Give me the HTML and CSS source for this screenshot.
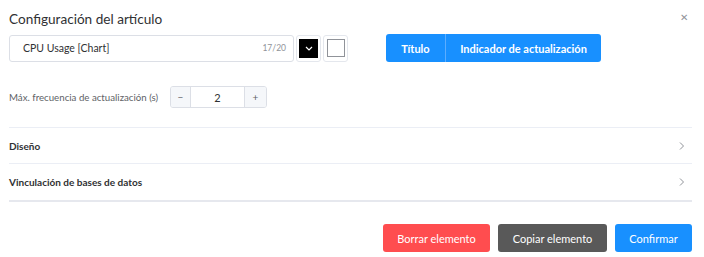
FILE: index.html
```html
<!DOCTYPE html>
<html lang="es">
<head>
    <meta charset="UTF-8">
    <title>Configuración del artículo</title>
    <link rel="stylesheet" href="styles.css">
</head>
<body>
    <div class="dialog">
        <div class="dialog-header">
            <span class="dialog-title">Configuración del artículo</span>
            <span class="close">&#x2715;</span>
        </div>

        <div class="title-row">
            <div class="title-input">
                <span class="value">CPU Usage [Chart]</span>
                <span class="count">17/20</span>
            </div>
            <div class="picker">
                <div class="swatch black">
                    <svg width="8" height="5" viewBox="0 0 8 5"><path d="M1 1l3 3 3-3" fill="none" stroke="#fff" stroke-width="1.2"/></svg>
                </div>
            </div>
            <div class="picker">
                <div class="swatch white"></div>
            </div>
            <div class="btn-group">
                <div class="seg">Título</div>
                <div class="seg">Indicador de actualización</div>
            </div>
        </div>

        <div class="freq-row">
            <label>Máx. frecuencia de actualización (s)</label>
            <div class="num-input">
                <span class="step">&minus;</span>
                <span class="num">2</span>
                <span class="step">+</span>
            </div>
        </div>

        <div class="collapse">
            <div class="collapse-item">
                <span>Diseño</span>
                <svg width="8" height="10" viewBox="0 0 8 10"><path d="M2 1.5l3.5 3.5-3.5 3.5" fill="none" stroke="#909399" stroke-width="1"/></svg>
            </div>
            <div class="collapse-item last">
                <span>Vinculación de bases de datos</span>
                <svg width="8" height="10" viewBox="0 0 8 10"><path d="M2 1.5l3.5 3.5-3.5 3.5" fill="none" stroke="#909399" stroke-width="1"/></svg>
            </div>
        </div>

        <div class="footer">
            <button class="btn danger">Borrar elemento</button>
            <button class="btn dark">Copiar elemento</button>
            <button class="btn primary">Confirmar</button>
        </div>
    </div>
</body>
</html>
```

FILE: styles.css
```css
* {
    margin: 0;
    padding: 0;
    box-sizing: border-box;
    font-family: Lato, "Open Sans", sans-serif;
    white-space: nowrap;
}

body {
    background-color: #fff;
    width: 704px;
    height: 257px;
    overflow: hidden;
}

.dialog {
    padding: 6px 12px 0 9px;
}

.dialog-header {
    display: flex;
    justify-content: space-between;
    align-items: center;
    height: 26px;
}

.dialog-title {
    font-size: 13.6px;
    color: #303133;
}

.close {
    font-size: 10px;
    color: #909399;
    margin-right: 4px;
    margin-top: -5px;
}

.title-row {
    display: flex;
    align-items: center;
    margin-top: 2px;
    height: 28px;
}

.title-input {
    width: 285px;
    height: 27px;
    border: 1px solid #dcdfe6;
    border-radius: 3px;
    display: flex;
    align-items: center;
    justify-content: space-between;
    padding: 0 7px 0 13px;
}

.title-input .value {
    font-size: 10.5px;
    color: #303133;
}

.title-input .count {
    font-size: 8.5px;
    color: #909399;
}

.picker {
    width: 25px;
    height: 27px;
    border: 1px solid #e4e7ed;
    border-radius: 3px;
    margin-left: 2px;
    display: flex;
    align-items: center;
    justify-content: center;
}

.swatch {
    width: 19px;
    height: 19px;
    display: flex;
    align-items: center;
    justify-content: center;
}

.swatch.black {
    background-color: #000;
}

.swatch.white {
    background-color: #fff;
    border: 1px solid #909399;
    width: 18px;
    height: 18px;
}

.btn-group {
    display: flex;
    margin-left: 38px;
    height: 28px;
}

.seg {
    background-color: #1890ff;
    color: #fff;
    font-size: 11px;
    font-weight: bold;
    display: flex;
    align-items: center;
    justify-content: center;
}

.seg:first-child {
    border-radius: 3px 0 0 3px;
    border-right: 1px solid #5cadff;
    width: 60px;
}

.seg:last-child {
    border-radius: 0 3px 3px 0;
    width: 155px;
}

.freq-row {
    display: flex;
    align-items: center;
    margin-top: 24px;
    height: 22px;
}

.freq-row label {
    font-size: 9.7px;
    color: #606266;
    width: 161px;
}

.num-input {
    display: flex;
    width: 97px;
    height: 22px;
    border: 1px solid #dcdfe6;
    border-radius: 3px;
    overflow: hidden;
}

.step {
    width: 20px;
    background-color: #f5f7fa;
    color: #606266;
    font-size: 10px;
    display: flex;
    align-items: center;
    justify-content: center;
}

.step:first-child {
    border-right: 1px solid #dcdfe6;
}

.step:last-child {
    border-left: 1px solid #dcdfe6;
    width: 22px;
}

.num {
    flex: 1;
    font-size: 11px;
    color: #303133;
    display: flex;
    align-items: center;
    justify-content: center;
}

.collapse {
    margin-top: 19px;
    width: 683px;
    border-top: 1px solid #ebeef5;
    border-bottom: 2px solid #e6e8ee;
}

.collapse-item {
    display: flex;
    align-items: center;
    justify-content: space-between;
    height: 36px;
    border-bottom: 1px solid #ebeef5;
    padding-right: 6px;
    font-size: 10px;
    font-weight: bold;
    color: #303133;
}

.collapse-item.last {
    border-bottom: none;
}

.footer {
    display: flex;
    justify-content: flex-end;
    gap: 8px;
    margin-top: 22px;
    width: 683px;
}

.btn {
    height: 28px;
    border: none;
    border-radius: 3px;
    color: #fff;
    font-size: 11px;
}

.btn.danger {
    background-color: #ff4d4f;
    width: 107px;
}

.btn.dark {
    background-color: #595959;
    width: 109px;
}

.btn.primary {
    background-color: #1890ff;
    width: 77px;
}
```
